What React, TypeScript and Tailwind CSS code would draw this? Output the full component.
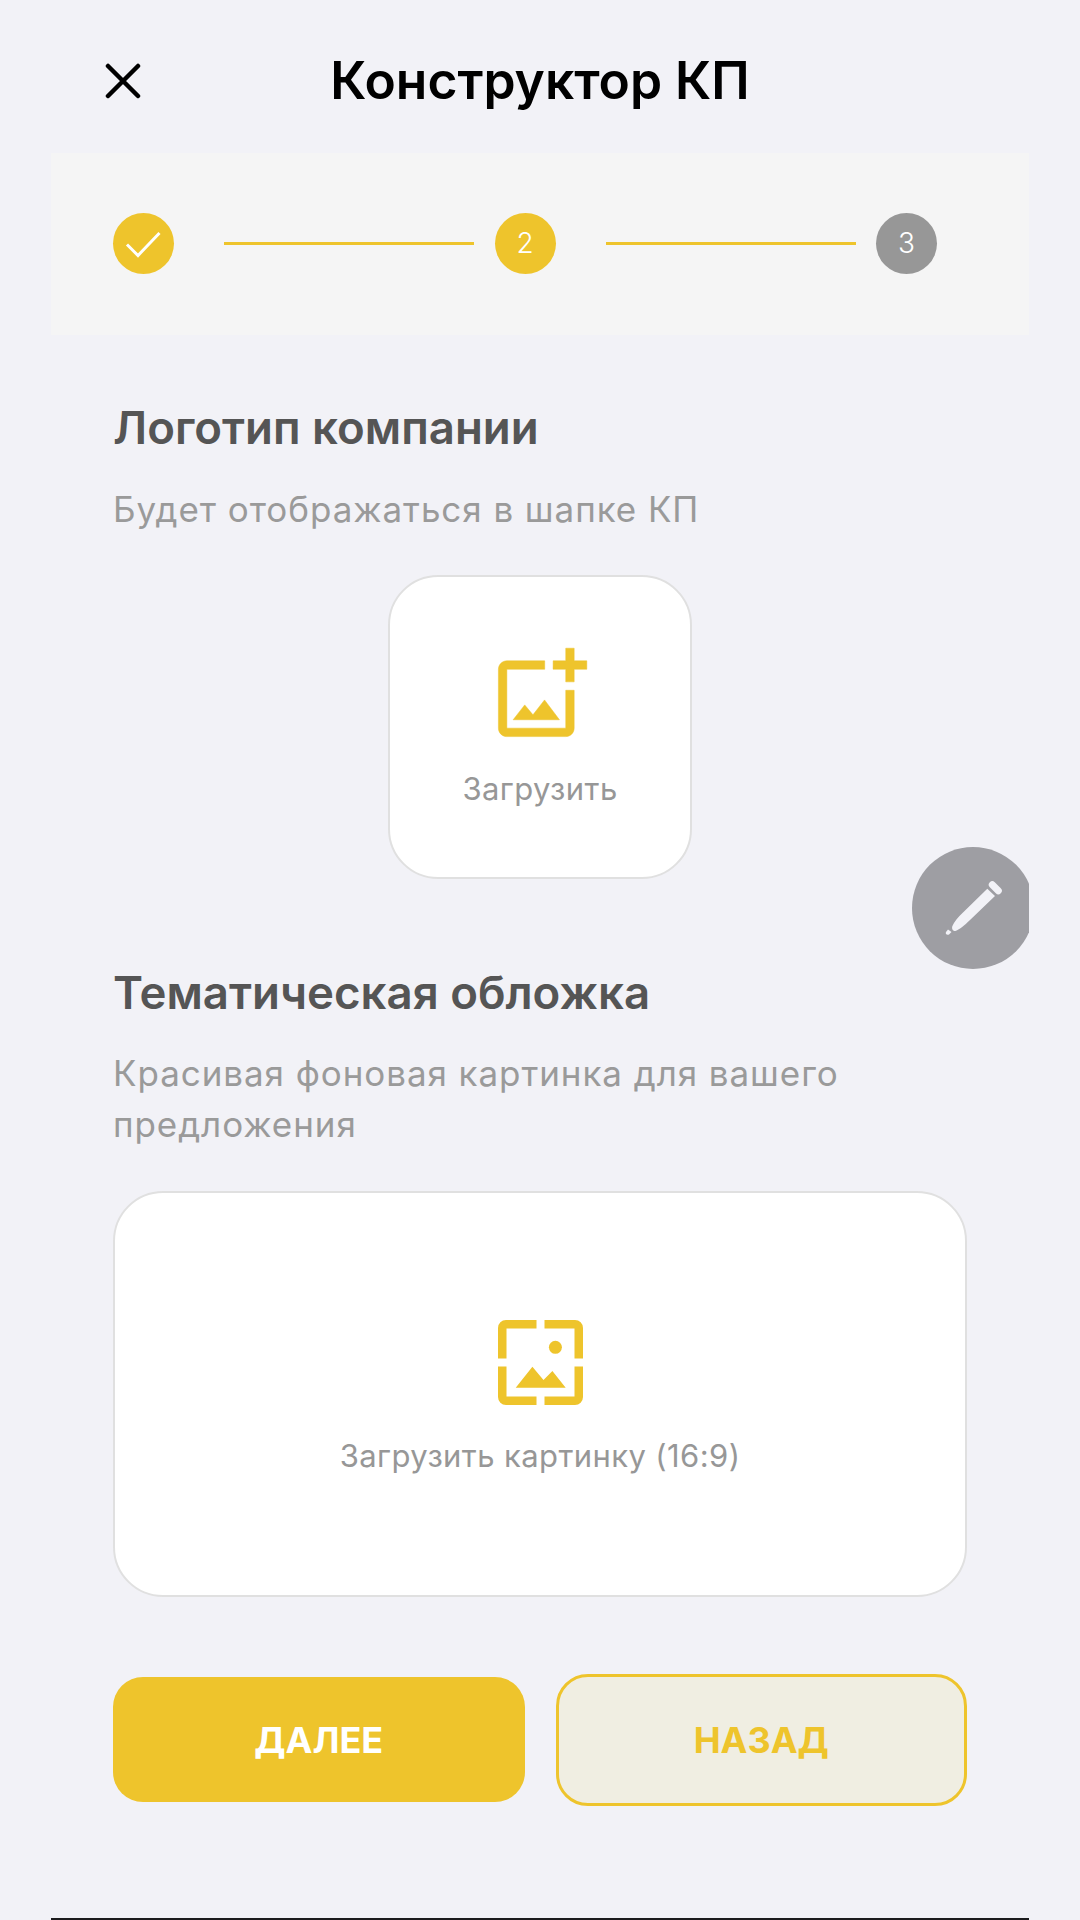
import React from "react";

function Step({ children, gray }: { children: React.ReactNode; gray?: boolean }) {
  return (
    <div
      className={`w-[61px] h-[61px] rounded-full flex items-center justify-center text-white text-[28px] font-light shrink-0 ${
        gray ? "bg-[#979797]" : "bg-[#eec42c]"
      }`}
    >
      {children}
    </div>
  );
}

function AddImageIcon() {
  return (
    <svg width="101" height="101" viewBox="0 0 24 24" fill="#eec42c" stroke="#eec42c" strokeWidth="0.12">
      <path d="M18 20H4V6h9V4H4c-1.1 0-2 .9-2 2v14c0 1.1.9 2 2 2h14c1.1 0 2-.9 2-2v-9h-2v9zm-7.79-3.17l-1.96-2.36L5.5 18h11l-3.54-4.71zM20 4V1h-2v3h-3c.01.01 0 2 0 2h3v2.99c.01.01 2 0 2 0V6h3V4h-3z" />
    </svg>
  );
}

function CoverIcon() {
  return (
    <svg width="85" height="85" viewBox="0 0 85 85" fill="#eec42c">
      <path d="M38.5 0H8a8 8 0 0 0-8 8v30.5h8.5V8.5h30V0z" />
      <path d="M46.5 0H77a8 8 0 0 1 8 8v30.5h-8.5V8.5h-30V0z" />
      <path d="M38.5 85H8a8 8 0 0 1-8-8V46.5h8.5v30h30V85z" />
      <path d="M46.5 85H77a8 8 0 0 0 8-8V46.5h-8.5v30h-30V85z" />
      <circle cx="57.4" cy="27.3" r="6.5" />
      <path d="M17.7 67.7L34.4 46.7L45.5 60L54.4 51L67.7 67.7z" />
    </svg>
  );
}

function PencilIcon() {
  return (
    <svg width="122" height="122" viewBox="0 0 122 122" fill="#f2f2f7">
      <path d="M75.3 41.7L83 49L58 73C52 79 48 82 43.5 84C41 84.5 39.5 82 40.3 79.3C42 75 46 70.5 51 65.6z" />
      <path d="M80.3 37.7L86.3 43.7" stroke="#f2f2f7" strokeWidth="7" strokeLinecap="round" />
      <path d="M36 82.5L39.5 85L37 87.5C35 88.5 33 87 34 85z" />
    </svg>
  );
}

export default function App() {
  return (
    <div
      className="w-[1080px] h-[1920px] bg-[#f2f2f7] px-[51px]"
      style={{ fontFamily: "Inter, 'Noto Sans', sans-serif" }}
    >
      <div className="relative h-full flex flex-col overflow-hidden border-b-2 border-[#1c1c1e]">
        <header className="h-[153px] shrink-0 relative flex items-center justify-center pt-[7px]">
          <button className="absolute left-[54px] top-[63px] w-[36px] h-[36px]">
            <svg width="36" height="36" viewBox="0 0 36 36" stroke="#000" strokeWidth="4.5" strokeLinecap="round">
              <path d="M3 3L33 33M33 3L3 33" />
            </svg>
          </button>
          <h1 className="text-[51.5px] leading-[60px] font-semibold text-black">Конструктор КП</h1>
        </header>

        <div className="h-[182px] shrink-0 bg-[#f5f5f5] flex items-center pl-[62px] pr-[92px] pb-[2px]">
          <Step>
            <svg width="61" height="61" viewBox="0 0 61 61" fill="none" stroke="#fff" strokeWidth="3">
              <path d="M14 31.5L25 42.5L46.5 20" />
            </svg>
          </Step>
          <div className="w-[250px] h-[3px] bg-[#eec42c] ml-[50px] mr-[20.5px]" />
          <Step>2</Step>
          <div className="w-[250px] h-[3px] bg-[#eec42c] ml-[50.5px] mr-[20px]" />
          <Step gray>3</Step>
        </div>

        <main className="flex-1 px-[62px] pt-[66px] flex flex-col">
          <h2 className="text-[45.6px] leading-[54px] font-semibold text-[#555555]">Логотип компании</h2>
          <p className="mt-[29px] text-[35px] leading-[51px] text-[#9a9a9a] tracking-[0.93px]">
            Будет отображаться в шапке КП
          </p>
          <div className="mt-[40px] self-center w-[304px] h-[304px] rounded-[50px] bg-white border-[2.5px] border-[#e0e0e0] flex flex-col items-center">
            <div className="mt-[67px]">
              <AddImageIcon />
            </div>
            <span className="mt-[27px] text-[31px] leading-[34px] text-[#979797] tracking-[0.4px]">Загрузить</span>
          </div>

          <h2 className="mt-[87px] text-[45.6px] leading-[54px] font-semibold text-[#555555]">
            Тематическая обложка
          </h2>
          <p className="mt-[28px] text-[35px] leading-[51px] text-[#9a9a9a] tracking-[0.93px]">
            Красивая фоновая картинка для вашего предложения
          </p>
          <div className="mt-[40.5px] h-[406px] rounded-[50px] bg-white border-[2.5px] border-[#e0e0e0] flex flex-col items-center">
            <div className="mt-[127px]">
              <CoverIcon />
            </div>
            <span className="mt-[34px] text-[31px] leading-[34px] text-[#979797] tracking-[0.4px]">
              Загрузить картинку (16:9)
            </span>
          </div>

          <div className="mt-[77px] flex items-center gap-[31px]">
            <button className="w-[412px] h-[125px] rounded-[30px] bg-[#eec42c] text-white text-[36px] font-bold">
              ДАЛЕЕ
            </button>
            <button className="w-[412px] h-[132px] rounded-[32px] bg-[#f0eee2] border-[3px] border-[#eec42c] text-[#eec42c] text-[36px] font-bold">
              НАЗАД
            </button>
          </div>
        </main>

        <button className="absolute left-[861px] top-[847px] w-[122px] h-[122px] rounded-full bg-[#9e9ea3]">
          <PencilIcon />
        </button>
      </div>
    </div>
  );
}
